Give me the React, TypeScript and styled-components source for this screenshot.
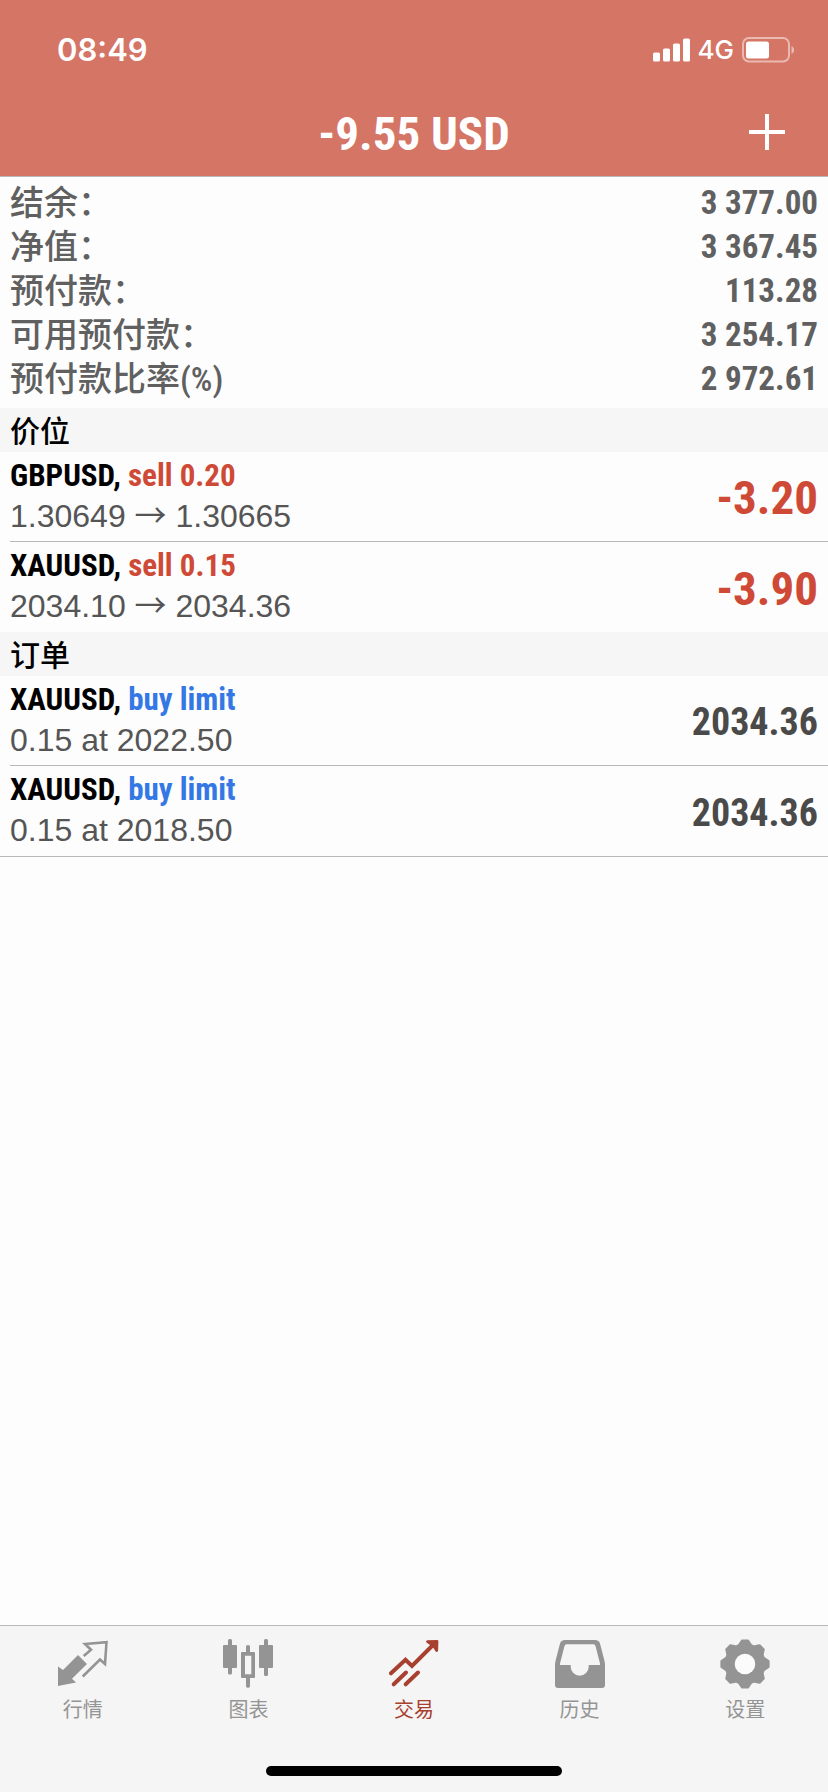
import React from "react";
import styled, { createGlobalStyle } from "styled-components";

const cjk = '"Noto Sans CJK SC", sans-serif';
const condensed = `"Roboto Condensed", ${cjk}`;
const regular = `"Liberation Sans", ${cjk}`;

const colors = {
  header: "#d57565",
  loss: "#cf4a36",
  buy: "#3478e5",
  active: "#a8402f",
  muted: "#949494",
  line: "#b9b9bb",
  band: "#f6f6f6",
};

const GlobalStyle = createGlobalStyle`
  *, *::before, *::after { box-sizing: border-box; }
  body { margin: 0; background: #fdfdfd; font-family: ${regular}; }
  h1, h2, p, dl, dt, dd, ul { margin: 0; padding: 0; }
  ul { list-style: none; }
`;

const Screen = styled.div`
  min-height: 100vh;
  display: flex;
  flex-direction: column;
`;

const Header = styled.header`
  background: ${colors.header};
  border-bottom: 1px solid ${colors.line};
  color: #fff;
`;

const StatusBar = styled.div`
  display: flex;
  align-items: center;
  justify-content: space-between;
  height: 88px;
  padding: 12px 33px 0 57px;
`;

const Clock = styled.time`
  font: 600 31px/32px Inter, sans-serif;
`;

const StatusIcons = styled.div`
  display: flex;
  align-items: center;
  gap: 8px;
`;

const Network = styled.span`
  font: 500 26px/28px Inter, sans-serif;
`;

const TitleBar = styled.div`
  display: grid;
  grid-template-columns: 1fr auto 1fr;
  align-items: center;
  height: 88px;
  padding: 0 35px;
`;

const Title = styled.h1`
  grid-column: 2;
  padding-top: 3px;
  font: 700 47px/56px ${condensed};
`;

const AddButton = styled.button`
  justify-self: end;
  display: flex;
  padding: 8px;
  border: 0;
  background: none;
  color: inherit;
`;

const Summary = styled.dl`
  padding: 4px 10px 7px;
`;

const SummaryRow = styled.div`
  display: flex;
  justify-content: space-between;
  color: #606060;
  line-height: 44px;
`;

const Label = styled.dt`
  font-family: ${condensed};
  font-size: 34px;
  font-weight: 500;
`;

const Amount = styled.dd`
  font-family: ${condensed};
  font-size: 33px;
  font-weight: 700;
`;

const SectionTitle = styled.h2`
  padding: 0 10px 2px;
  background: ${colors.band};
  font: 500 30px/42px ${cjk};
  color: #000;
`;

const List = styled.ul<{ $closed?: boolean }>`
  border-bottom: ${(p) => (p.$closed ? `1px solid ${colors.line}` : "0")};
`;

const Item = styled.li`
  display: flex;
  align-items: center;
  justify-content: space-between;
  height: 90px;
  margin-left: 10px;
  padding-right: 10px;

  &:not(:last-child) {
    border-bottom: 1px solid ${colors.line};
  }
`;

const ItemText = styled.div`
  padding-bottom: 2px;
`;

const Symbol = styled.p`
  font: 700 31px/40px ${condensed};
  color: #000;
`;

const Side = styled.span<{ $side: "sell" | "buy" }>`
  color: ${(p) => (p.$side === "sell" ? colors.loss : colors.buy)};
`;

const Detail = styled.p`
  font: 400 32px/40px ${regular};
  color: #555;
`;

const Arrow = styled.span`
  font-family: ${cjk};
  line-height: 1;
`;

const Result = styled.strong<{ $loss?: boolean }>`
  padding-top: 3px;
  font: 700 ${(p) => (p.$loss ? 47 : 38)}px/56px ${condensed};
  color: ${(p) => (p.$loss ? colors.loss : "#4a4a4a")};
`;

const Footer = styled.footer`
  margin-top: auto;
  border-top: 1px solid ${colors.line};
  background: #f5f5f5;
`;

const Tabs = styled.nav`
  display: grid;
  grid-template-columns: repeat(5, 1fr);
  padding-top: 13px;
`;

const Tab = styled.a<{ $active?: boolean }>`
  display: flex;
  flex-direction: column;
  align-items: center;
  gap: 5px;
  font: 400 20px/30px ${cjk};
  color: ${(p) => (p.$active ? colors.active : colors.muted)};
  text-decoration: none;
`;

const HomeIndicator = styled.div`
  width: 296px;
  height: 10px;
  margin: 42px auto 16px;
  border-radius: 5px;
  background: #000;
`;

const SignalIcon = () => (
  <svg width="37" height="24" viewBox="0 0 37 24" fill="currentColor" aria-hidden="true">
    <rect x="0" y="14.5" width="7" height="9" rx="1.5" />
    <rect x="10" y="10.5" width="7" height="13" rx="1.5" />
    <rect x="20" y="5.5" width="7" height="18" rx="1.5" />
    <rect x="30" y="0.5" width="7" height="23" rx="1.5" />
  </svg>
);

const BatteryIcon = () => (
  <svg width="53" height="26" viewBox="0 0 53 26" fill="none" aria-hidden="true">
    <rect x="1" y="1" width="46" height="23.5" rx="6" stroke="#fff" strokeOpacity=".5" strokeWidth="2" />
    <rect x="4" y="4.5" width="23" height="17" rx="2.5" fill="#fff" />
    <path d="M49.5 9v8c3.5-1.5 3.5-6.5 0-8Z" fill="#fff" fillOpacity=".5" />
  </svg>
);

const PlusIcon = () => (
  <svg width="36" height="36" viewBox="0 0 36 36" stroke="currentColor" strokeWidth="4" aria-hidden="true">
    <path d="M18 0v36M0 18h36" />
  </svg>
);

const iconProps = { width: 50, height: 50, viewBox: "0 0 50 50", "aria-hidden": true } as const;

const QuotesIcon = () => (
  <svg {...iconProps} fill="none">
    <path d="M0 27.5 5 31 20 16 29 25 14 39.7 18 43.5 0 47Z" fill="currentColor" />
    <path d="M25.7 17 33 10.7 27 5 48.5 3.2 47 25 42 20.5 24.7 37.5" stroke="currentColor" strokeWidth="2.6" />
  </svg>
);

const ChartIcon = () => (
  <svg {...iconProps} fill="currentColor">
    <rect x="0" y="6" width="14" height="23" rx="1" />
    <rect x="5" y="0" width="4" height="35.5" rx="1.5" />
    <path fillRule="evenodd" d="M19 13h12q1 0 1 1v24q0 1-1 1H19q-1 0-1-1V14q0-1 1-1Zm3 3.7v18.6h6.300V16.7Z" />
    <path d="M23 13V7.5q0-1.5 2-1.5t2 1.5V13ZM23 39v8.200q0 1.5 2 1.5t2-1.5V39Z" />
    <rect x="36" y="6" width="14" height="23" rx="1" />
    <rect x="41" y="0" width="4" height="37" rx="1.5" />
  </svg>
);

const TradeIcon = () => (
  <svg {...iconProps} fill="none" stroke="currentColor" strokeWidth="4" strokeLinecap="round">
    <path d="M2 34.3 16.5 20.7 23 27 46 4" />
    <path d="M4.7 45.3 17 33.5M16.7 45.3 29 33.5" />
    <path d="M38.5 2.6 48 2.3 47.7 11.5 44.5 6.5Z" strokeWidth="2.8" strokeLinejoin="round" fill="currentColor" />
  </svg>
);

const HistoryIcon = () => (
  <svg {...iconProps} fill="currentColor">
    <path
      fillRule="evenodd"
      d="M10 1h30q4 0 5 3.5L49.5 22q.5 2 .5 4v20q0 3-3 3H3q-3 0-3-3V26q0-2 .5-4L5 4.5Q6 1 10 1Zm1.5 4.300Q10 5.300 9.5 7L5 24.5V26h10.700v1.700a9 9 0 0 0 18 0V26H45v-1.5L40.5 7Q40 5.300 38.5 5.300Z"
    />
  </svg>
);

const gearOutline = Array.from({ length: 8 }, (_, i) => i * 45)
  .flatMap((a) => [
    [a - 14, 21],
    [a - 7, 23.8],
    [a + 7, 23.8],
    [a + 14, 21],
    [a + 18, 19.8],
    [a + 27, 19.8],
  ])
  .map(([deg, r]) => {
    const t = (deg * Math.PI) / 180;
    return `${(25 + r * Math.cos(t)).toFixed(2)},${(25 + r * Math.sin(t)).toFixed(2)}`;
  })
  .join(" ");

const SettingsIcon = () => (
  <svg {...iconProps}>
    <polygon points={gearOutline} fill="currentColor" stroke="currentColor" strokeWidth="2" strokeLinejoin="round" />
    <circle cx="25" cy="25" r="10.3" fill="#fbfbfb" />
  </svg>
);

const summary = [
  ["结余：", "3 377.00"],
  ["净值：", "3 367.45"],
  ["预付款：", "113.28"],
  ["可用预付款：", "3 254.17"],
  ["预付款比率(%)", "2 972.61"],
];

const positions = [
  { symbol: "GBPUSD", side: "sell 0.20", open: "1.30649", current: "1.30665", profit: "-3.20" },
  { symbol: "XAUUSD", side: "sell 0.15", open: "2034.10", current: "2034.36", profit: "-3.90" },
];

const orders = [
  { symbol: "XAUUSD", side: "buy limit", detail: "0.15 at 2022.50", price: "2034.36" },
  { symbol: "XAUUSD", side: "buy limit", detail: "0.15 at 2018.50", price: "2034.36" },
];

const tabs = [
  { id: "quotes", label: "行情", Icon: QuotesIcon },
  { id: "chart", label: "图表", Icon: ChartIcon },
  { id: "trade", label: "交易", Icon: TradeIcon },
  { id: "history", label: "历史", Icon: HistoryIcon },
  { id: "settings", label: "设置", Icon: SettingsIcon },
];

export default function App() {
  return (
    <Screen lang="zh-CN">
      <GlobalStyle />
      <Header>
        <StatusBar>
          <Clock>08:49</Clock>
          <StatusIcons>
            <SignalIcon />
            <Network>4G</Network>
            <BatteryIcon />
          </StatusIcons>
        </StatusBar>
        <TitleBar>
          <Title>-9.55 USD</Title>
          <AddButton type="button" aria-label="新订单">
            <PlusIcon />
          </AddButton>
        </TitleBar>
      </Header>
      <main>
        <Summary>
          {summary.map(([label, value]) => (
            <SummaryRow key={label}>
              <Label>{label}</Label>
              <Amount>{value}</Amount>
            </SummaryRow>
          ))}
        </Summary>
        <SectionTitle>价位</SectionTitle>
        <List>
          {positions.map((p) => (
            <Item key={p.symbol}>
              <ItemText>
                <Symbol>
                  {p.symbol}, <Side $side="sell">{p.side}</Side>
                </Symbol>
                <Detail>
                  {p.open} <Arrow>→</Arrow> {p.current}
                </Detail>
              </ItemText>
              <Result $loss>{p.profit}</Result>
            </Item>
          ))}
        </List>
        <SectionTitle>订单</SectionTitle>
        <List $closed>
          {orders.map((o) => (
            <Item key={o.detail}>
              <ItemText>
                <Symbol>
                  {o.symbol}, <Side $side="buy">{o.side}</Side>
                </Symbol>
                <Detail>{o.detail}</Detail>
              </ItemText>
              <Result>{o.price}</Result>
            </Item>
          ))}
        </List>
      </main>
      <Footer>
        <Tabs>
          {tabs.map(({ id, label, Icon }) => (
            <Tab key={id} href={`#${id}`} $active={id === "trade"} aria-current={id === "trade" ? "page" : undefined}>
              <Icon />
              {label}
            </Tab>
          ))}
        </Tabs>
        <HomeIndicator />
      </Footer>
    </Screen>
  );
}
